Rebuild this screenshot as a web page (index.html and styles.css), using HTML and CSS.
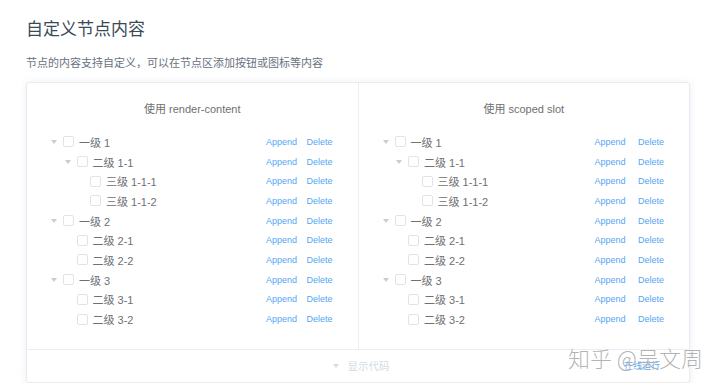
FILE: index.html
```html
<!DOCTYPE html>
<html lang="zh-CN">
<head>
  <meta charset="UTF-8">
  <title>自定义节点内容</title>
  <link rel="stylesheet" href="styles.css">
</head>
<body>
  <h3 class="title">自定义节点内容</h3>
  <p class="desc">节点的内容支持自定义，可以在节点区添加按钮或图标等内容</p>

  <div class="demo-block">
    <div class="demo-source">
      <div class="col">
        <div class="col-title">使用 render-content</div>
        <ul class="tree">
          <li class="node lv1"><span class="caret"></span><span class="check"></span><span class="label">一级 1</span><span class="ops"><a>Append</a><a>Delete</a></span></li>
          <li class="node lv2"><span class="caret"></span><span class="check"></span><span class="label">二级 1-1</span><span class="ops"><a>Append</a><a>Delete</a></span></li>
          <li class="node lv3"><span class="caret leaf"></span><span class="check"></span><span class="label">三级 1-1-1</span><span class="ops"><a>Append</a><a>Delete</a></span></li>
          <li class="node lv3"><span class="caret leaf"></span><span class="check"></span><span class="label">三级 1-1-2</span><span class="ops"><a>Append</a><a>Delete</a></span></li>
          <li class="node lv1"><span class="caret"></span><span class="check"></span><span class="label">一级 2</span><span class="ops"><a>Append</a><a>Delete</a></span></li>
          <li class="node lv2"><span class="caret leaf"></span><span class="check"></span><span class="label">二级 2-1</span><span class="ops"><a>Append</a><a>Delete</a></span></li>
          <li class="node lv2"><span class="caret leaf"></span><span class="check"></span><span class="label">二级 2-2</span><span class="ops"><a>Append</a><a>Delete</a></span></li>
          <li class="node lv1"><span class="caret"></span><span class="check"></span><span class="label">一级 3</span><span class="ops"><a>Append</a><a>Delete</a></span></li>
          <li class="node lv2"><span class="caret leaf"></span><span class="check"></span><span class="label">二级 3-1</span><span class="ops"><a>Append</a><a>Delete</a></span></li>
          <li class="node lv2"><span class="caret leaf"></span><span class="check"></span><span class="label">二级 3-2</span><span class="ops"><a>Append</a><a>Delete</a></span></li>
        </ul>
      </div>
      <div class="col slot">
        <div class="col-title">使用 scoped slot</div>
        <ul class="tree">
          <li class="node lv1"><span class="caret"></span><span class="check"></span><span class="label">一级 1</span><span class="ops"><a>Append</a><a>Delete</a></span></li>
          <li class="node lv2"><span class="caret"></span><span class="check"></span><span class="label">二级 1-1</span><span class="ops"><a>Append</a><a>Delete</a></span></li>
          <li class="node lv3"><span class="caret leaf"></span><span class="check"></span><span class="label">三级 1-1-1</span><span class="ops"><a>Append</a><a>Delete</a></span></li>
          <li class="node lv3"><span class="caret leaf"></span><span class="check"></span><span class="label">三级 1-1-2</span><span class="ops"><a>Append</a><a>Delete</a></span></li>
          <li class="node lv1"><span class="caret"></span><span class="check"></span><span class="label">一级 2</span><span class="ops"><a>Append</a><a>Delete</a></span></li>
          <li class="node lv2"><span class="caret leaf"></span><span class="check"></span><span class="label">二级 2-1</span><span class="ops"><a>Append</a><a>Delete</a></span></li>
          <li class="node lv2"><span class="caret leaf"></span><span class="check"></span><span class="label">二级 2-2</span><span class="ops"><a>Append</a><a>Delete</a></span></li>
          <li class="node lv1"><span class="caret"></span><span class="check"></span><span class="label">一级 3</span><span class="ops"><a>Append</a><a>Delete</a></span></li>
          <li class="node lv2"><span class="caret leaf"></span><span class="check"></span><span class="label">二级 3-1</span><span class="ops"><a>Append</a><a>Delete</a></span></li>
          <li class="node lv2"><span class="caret leaf"></span><span class="check"></span><span class="label">二级 3-2</span><span class="ops"><a>Append</a><a>Delete</a></span></li>
        </ul>
      </div>
    </div>
    <div class="demo-control">
      <span class="caret"></span><span>显示代码</span>
      <a class="run">在线运行</a>
    </div>
  </div>

  <div class="watermark">知乎 @吴文周</div>
</body>
</html>
```

FILE: styles.css
```css
body {
  margin: 0;
  padding: 0 30px 0 26px;
  font-family: "Liberation Sans", "Noto Sans CJK SC", sans-serif;
  color: #606266;
  background: #fff;
  position: relative;
}
.title {
  margin: 18px 0 0;
  font-size: 17px;
  line-height: 24px;
  font-weight: normal;
  color: #3c4a56;
}
.desc {
  margin: 13px 0 11px;
  font-size: 11px;
  line-height: 16px;
  color: #68727e;
}
.demo-block {
  position: relative;
  border: 1px solid #ebebeb;
  border-radius: 3px;
  box-shadow: 0 0 8px 0 rgba(232,237,250,.6), 0 2px 4px 0 rgba(232,237,250,.5);
}
.demo-source { display: flex; }
.col {
  flex: 1;
  padding: 16px 18px 20px;
  border-right: 1px solid #eeeeee;
}
.col.slot { border-right: none; }
.col-title {
  text-align: center;
  font-size: 11px;
  line-height: 20px;
  color: #707070;
}
.tree { list-style: none; margin: 13px 0 0; padding: 0; }
.node {
  display: flex;
  align-items: center;
  height: 19.7px;
  font-size: 11px;
}
.lv2 { padding-left: 13.5px; }
.lv3 { padding-left: 27px; }
.caret {
  width: 18px;
  height: 10px;
  display: flex;
  align-items: center;
  justify-content: center;
}
.caret::before {
  content: "";
  border-left: 3px solid transparent;
  border-right: 3px solid transparent;
  border-top: 4px solid #c8ccd4;
}
.caret.leaf::before { border-top-color: transparent; }
.check {
  width: 11px;
  height: 11px;
  box-sizing: border-box;
  border: 1px solid #e0e3e8;
  border-radius: 2px;
  background: #fff;
  margin-right: 5px;
}
.label { flex: 1; color: #6e7073; }
.ops { display: flex; gap: 9.5px; padding-right: 7px; }
.slot .ops { gap: 12.5px; padding-right: 7px; }
.ops a, .run {
  font-size: 9px;
  color: #54a6f5;
  cursor: pointer;
}
.demo-control {
  height: 32px;
  border-top: 1px solid #eaeefb;
  display: flex;
  align-items: center;
  justify-content: center;
  gap: 3px;
  font-size: 10.5px;
  color: #d3dce6;
}
.demo-control .caret::before { border-top-color: #d3dce6; }
.demo-control .run {
  position: absolute;
  right: 29px;
  bottom: 10px;
}
.watermark {
  position: absolute;
  left: 568px;
  top: 343px;
  font-size: 22px;
  line-height: 28px;
  color: rgba(130,130,130,0.6);
  font-family: "Noto Sans CJK SC", sans-serif;
  font-weight: 300;
  text-shadow: 0 0 2px #fff;
}
```
